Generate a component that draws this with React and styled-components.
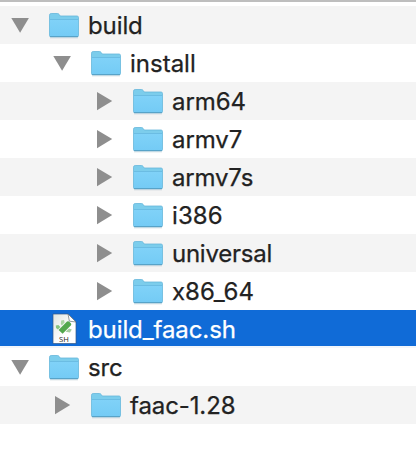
import React from "react";
import styled, { createGlobalStyle } from "styled-components";

const GlobalStyle = createGlobalStyle`
  body { margin: 0; background: #fff; }
`;

const FileList = styled.div`
  width: 416px;
  height: 452px;
  box-sizing: border-box;
  overflow: hidden;
  background: #fff;
  border-top: 2px solid #bebebe;
  padding-top: 4px;
  font-family: Inter, "Liberation Sans", sans-serif;
`;

const Row = styled.div`
  display: flex;
  align-items: flex-start;
  height: 38px;
  box-sizing: border-box;
  padding-left: ${(p) => 8 + p.$depth * 42}px;
  color: ${(p) => (p.$selected ? "#fff" : "#222")};
  background: ${(p) => (p.$selected ? "#106bd7" : p.$striped ? "#f4f4f4" : "#fff")};
  border-bottom: ${(p) => (p.$selected ? "2px solid #f2f6fb" : "0")};
`;

const Disclosure = styled.svg`
  flex: none;
  width: 24px;
  height: 38px;
  margin-right: 16px;
  fill: #8e8e8e;
`;

const Icon = styled.svg`
  flex: none;
  width: 32px;
  height: 38px;
`;

const Label = styled.span`
  margin-left: 8px;
  font-size: 24px;
  font-weight: 400;
  line-height: 40px;
  letter-spacing: ${(p) => p.$tracking}px;
  -webkit-text-stroke: 0.25px currentColor;
  white-space: pre;
`;

const Arrow = ({ state }) => (
  <Disclosure viewBox="0 0 24 38">
    {state === "open" && <path d="M3.3 12H20.9L12.1 26.7Z" />}
    {state === "closed" && <path d="M5 10V28.2L20.2 19.1Z" />}
  </Disclosure>
);

const Folder = () => (
  <Icon viewBox="0 0 32 38">
    <defs>
      <linearGradient id="front" x1="0" y1="0" x2="0" y2="1">
        <stop offset="0" stopColor="#80d2f8" />
        <stop offset="1" stopColor="#74cbf5" />
      </linearGradient>
    </defs>
    <path d="M2 31.8H30" stroke="#b5c3ca" strokeWidth="1" opacity=".6" />
    <path
      d="M1.5 9.2Q1.5 7.5 3.2 7.5H9.5Q10.5 7.5 11.2 8.5L12.3 10H29Q30.5 10 30.5 11.5V29.5Q30.5 30.8 29.2 30.8H2.8Q1.5 30.8 1.5 29.5Z"
      fill="#7ccdec"
      stroke="#66b6da"
      strokeWidth=".8"
    />
    <path d="M1.9 13.5H30.1V29.5Q30.1 30.2 29.2 30.2H2.8Q1.9 30.2 1.9 29.5Z" fill="url(#front)" />
    <path d="M2 13.5H30" stroke="#66b8de" strokeWidth=".8" />
    <path d="M2 30.5H30" stroke="#559fc4" strokeWidth=".9" />
  </Icon>
);

const ScriptGlyph = styled.text`
  font: 400 7.6px "Open Sans", sans-serif;
  fill: #222;
`;

const Script = () => (
  <Icon viewBox="0 0 32 38">
    <defs>
      <linearGradient id="paper" x1="0" y1="0" x2="1" y2="1">
        <stop offset="0" stopColor="#dfe4e0" />
        <stop offset=".6" stopColor="#fff" />
      </linearGradient>
    </defs>
    <path d="M5 4H20L28 12V33.5H5Z" fill="url(#paper)" stroke="#345885" strokeWidth=".7" />
    <path d="M13.2 10.4L16 10L16.6 12.6L13.8 15.4L12.8 14Z" fill="#a9d4a2" />
    <path d="M7.8 15.6L10.4 15L12.4 17L9.9 19.4L8 18Z" fill="#86c480" />
    <path d="M10.6 20L19 11.6Q20.4 10.8 21.3 11.8L23 13.6Q23.7 14.6 22.8 15.5L14.6 23.8Z" fill="#53a84d" />
    <path d="M17.6 21.8L21 18.4L23.8 19.4L22 22.4Z" fill="#a5cd9f" />
    <path d="M20 4L28 12L21.4 11.2Z" fill="#fff" stroke="#646d72" strokeWidth=".7" />
    <ScriptGlyph x="16" y="32" textAnchor="middle">SH</ScriptGlyph>
  </Icon>
);

const entries = [
  { name: "build", depth: 0, state: "open", tracking: -0.1 },
  { name: "install", depth: 1, state: "open", tracking: 0 },
  { name: "arm64", depth: 2, state: "closed", tracking: -0.05 },
  { name: "armv7", depth: 2, state: "closed", tracking: -0.1 },
  { name: "armv7s", depth: 2, state: "closed", tracking: -0.2 },
  { name: "i386", depth: 2, state: "closed", tracking: 0.1 },
  { name: "universal", depth: 2, state: "closed", tracking: -0.25 },
  { name: "x86_64", depth: 2, state: "closed", tracking: 0 },
  { name: "build_faac.sh", depth: 0, selected: true, tracking: -0.1 },
  { name: "src", depth: 0, state: "open", tracking: -0.1 },
  { name: "faac-1.28", depth: 1, state: "closed", tracking: -0.1 },
];

export default function App() {
  return (
    <>
      <GlobalStyle />
      <FileList>
        {entries.map((e, i) => (
          <Row key={e.name} $depth={e.depth} $selected={e.selected} $striped={i % 2 === 0}>
            <Arrow state={e.state} />
            {e.selected ? <Script /> : <Folder />}
            <Label $tracking={e.tracking}>{e.name}</Label>
          </Row>
        ))}
      </FileList>
    </>
  );
}
